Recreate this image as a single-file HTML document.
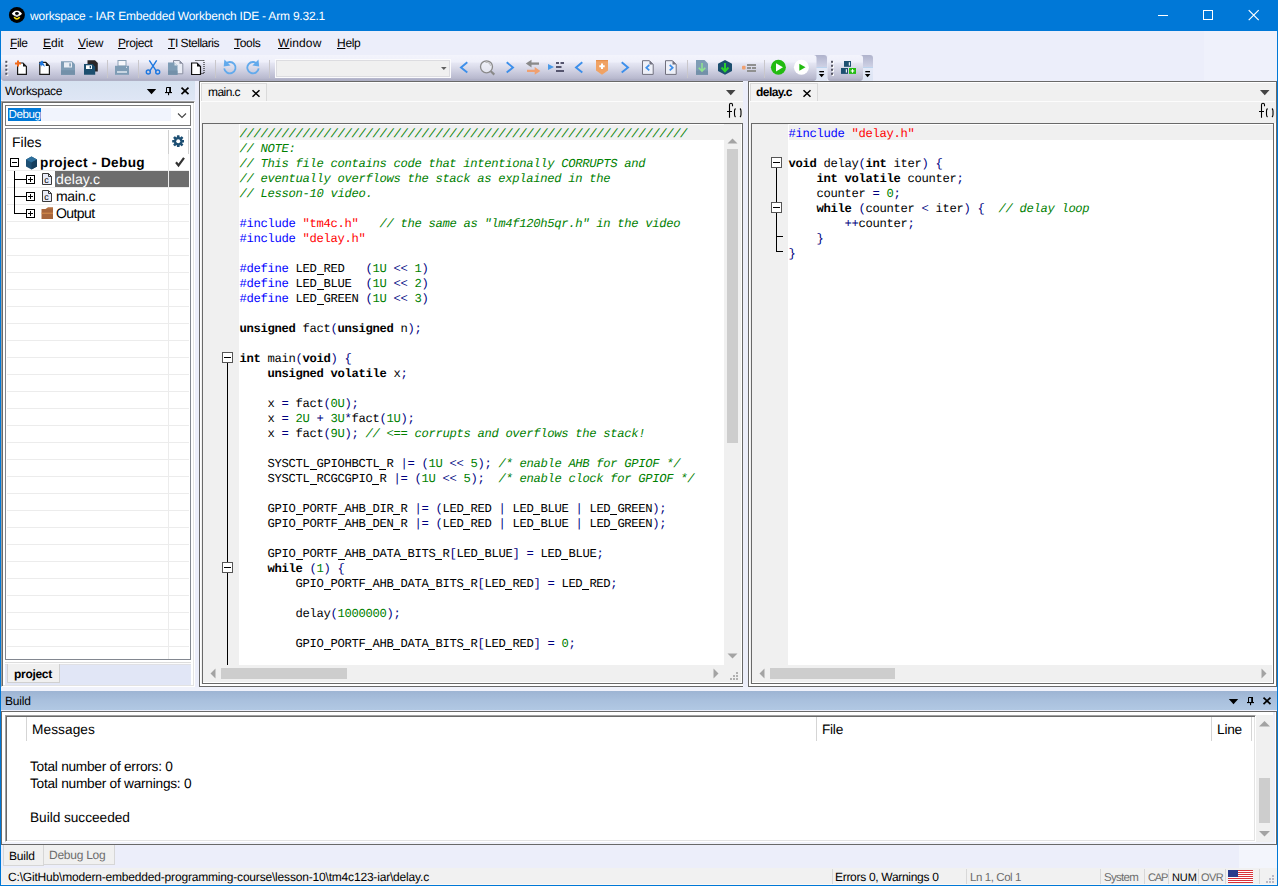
<!DOCTYPE html>
<html>
<head>
<meta charset="utf-8">
<title>workspace - IAR Embedded Workbench IDE - Arm 9.32.1</title>
<style>
*{box-sizing:border-box;margin:0;padding:0}
html,body{width:1278px;height:886px;overflow:hidden}
body{position:relative;background:#eceefa;font-family:"Liberation Sans",sans-serif;font-size:12px;text-rendering:geometricPrecision;color:#000}
.abs{position:absolute}
#win{position:absolute;left:0;top:0;width:1278px;height:886px;border-left:1px solid #0078d7;border-right:1px solid #0078d7;border-bottom:1px solid #0078d7}
/* title */
#title{position:absolute;left:0;top:0;width:1278px;height:31px;background:#0078d7;color:#fff}
#title .t{position:absolute;left:30px;top:9px;font-size:12px;text-rendering:geometricPrecision;line-height:15px;white-space:pre;letter-spacing:-0.2px}
/* menu */
#menu{position:absolute;left:1px;top:31px;width:1276px;height:24px;background:#eceefa}
#menu span{position:absolute;top:5px;font-size:12px;text-rendering:geometricPrecision;line-height:15px;white-space:pre}
#menu u{text-decoration:underline;text-underline-offset:1px}
/* toolbar */
.tb{position:absolute;top:55px;height:26px;background:linear-gradient(#f3f4fb 0%,#e4e6f2 45%,#c5c7d9 75%,#a8aac0 100%)}
/* panels */
.pane{position:absolute;background:#f0f0f0;border:1px solid #696969;box-shadow:inset 1px 1px 0 #fff}
.code{position:absolute;background:#fff;overflow:hidden}
pre{font-family:"Liberation Mono",monospace;font-size:12.2px;letter-spacing:-0.3212px;text-rendering:geometricPrecision;line-height:15px;white-space:pre;color:#000;position:absolute;left:0.6px;top:3px}
.c{color:#008000;font-style:italic}
.p{color:#0000ff}
.s{color:#ff0000}
.n{color:#008000}
.k{font-weight:bold}
.o{color:#000080}
.u{display:inline-block;width:7px;height:15px;vertical-align:top;position:relative;color:transparent;letter-spacing:0}
.u::after{content:"";position:absolute;left:0;top:12px;width:7px;height:1px;background:#000}
.bt{font-size:13.7px;line-height:17px;white-space:pre}
.st{top:870px;font-size:12px;text-rendering:geometricPrecision;line-height:15px;white-space:pre}
.g{color:#6d6d6d}
.sd{top:869px;width:1px;height:15px;background:#d8d8d8}
</style>
</head>
<body>
<div id="title">
<svg class="abs" style="left:8px;top:6px" width="18" height="18" viewBox="0 0 18 18"><circle cx="8.900" cy="8.900" r="8" fill="#000"/><path d="M3.800 7.800c1.700-2.500 3.400-3 5.100-3s3.400 0.500 5.100 3c-1.700 2-3.400 2.600-5.100 2.600S5.500 9.800 3.800 7.800z" fill="#fff"/><path d="M6.500 9.500h4.800l-2.400 1.700z" fill="#bbb"/><ellipse cx="8.900" cy="7.500" rx="1.900" ry="1.400" fill="#000"/><path d="M5.500 11c1 2.300 2.300 2.700 3.400 2.700s2.400-0.400 3.400-2.700l-1.400-0.300c-0.700 1-1.300 1.200-2 1.200s-1.300-0.200-2-1.200z" fill="#f2d80a"/></svg>
<svg class="abs" style="left:1150px;top:5px" width="120" height="21" viewBox="0 0 120 21"><g stroke="#fff" stroke-width="1" fill="none"><path d="M8 10.500h10" /><rect x="53.500" y="5.500" width="9" height="9"/><path d="M98.700 5.200l10 10M108.700 5.200l-10 10" stroke-width="1.200"/></g></svg>
<div class="t">workspace - IAR Embedded Workbench IDE - Arm 9.32.1</div></div>
<div id="menu">
<span style="left:9px;letter-spacing:-0.45px"><u>F</u>ile</span>
<span style="left:42px"><u>E</u>dit</span>
<span style="left:77px;letter-spacing:-0.1px"><u>V</u>iew</span>
<span style="left:117px;letter-spacing:-0.4px"><u>P</u>roject</span>
<span style="left:167px;letter-spacing:-0.47px"><u>T</u>I Stellaris</span>
<span style="left:233px;letter-spacing:-0.3px"><u>T</u>ools</span>
<span style="left:277px;letter-spacing:0.13px"><u>W</u>indow</span>
<span style="left:336px;letter-spacing:-0.3px"><u>H</u>elp</span>
</div>
<svg class="abs" id="tbsvg" style="left:0;top:55px" width="880" height="26" viewBox="0 0 880 26">
 <defs>
  <linearGradient id="tg" x1="0" y1="0" x2="0" y2="1"><stop offset="0" stop-color="#f3f4fc"/><stop offset="0.27" stop-color="#eff0fa"/><stop offset="0.32" stop-color="#e5e6f3"/><stop offset="0.506" stop-color="#d8d9e8"/><stop offset="0.7" stop-color="#c8c9dc"/><stop offset="0.895" stop-color="#b9bacf"/><stop offset="0.95" stop-color="#b2b3c9"/><stop offset="0.975" stop-color="#9c9db4"/><stop offset="1" stop-color="#9c9db4"/></linearGradient>
  <linearGradient id="cg" x1="0" y1="0" x2="0" y2="1"><stop offset="0" stop-color="#b0b3cc"/><stop offset="0.46" stop-color="#ced1e5"/><stop offset="0.47" stop-color="#bcd4ee"/><stop offset="0.51" stop-color="#bcd4ee"/><stop offset="0.52" stop-color="#e4e9f7"/><stop offset="1" stop-color="#dce4f4"/></linearGradient>
 </defs>
 <!-- caps -->
 <path d="M812 0h12a3 3 0 0 1 3 3v22.700h-15z" fill="url(#cg)"/>
 <path d="M858 0h12a3 3 0 0 1 3 3v22.700h-15z" fill="url(#cg)"/>
 <!-- bars -->
 <path d="M1 0h812.500a3 3 0 0 1 3 3v19.700a3 3 0 0 1-3 3H4a3 3 0 0 1-3-3z" fill="url(#tg)"/>
 <rect x="827.500" y="0" width="35.500" height="25.700" rx="3" fill="url(#tg)"/>
 <g fill="#000"><rect x="819.300" y="16" width="4.700" height="1.300"/><path d="M818.800 19h5.600l-2.800 3.200z"/><rect x="865.300" y="16" width="4.700" height="1.300"/><path d="M864.800 19h5.600l-2.800 3.200z"/></g>
 <!-- grips -->
 <g fill="#fff"><rect x="6.300" y="6.800" width="2" height="2"/><rect x="6.300" y="10.800" width="2" height="2"/><rect x="6.300" y="14.800" width="2" height="2"/><rect x="6.300" y="18.800" width="2" height="2"/><rect x="832" y="6.800" width="2" height="2"/><rect x="832" y="10.800" width="2" height="2"/><rect x="832" y="14.800" width="2" height="2"/><rect x="832" y="18.800" width="2" height="2"/></g>
 <g fill="#555562"><rect x="5.300" y="5.800" width="2" height="2"/><rect x="5.300" y="9.800" width="2" height="2"/><rect x="5.300" y="13.800" width="2" height="2"/><rect x="5.300" y="17.800" width="2" height="2"/><rect x="831" y="5.800" width="2" height="2"/><rect x="831" y="9.800" width="2" height="2"/><rect x="831" y="13.800" width="2" height="2"/><rect x="831" y="17.800" width="2" height="2"/></g>
 <!-- separators -->
 <g fill="#c9c7cb"><rect x="107" y="5" width="1" height="18"/><rect x="138" y="5" width="1" height="18"/><rect x="215" y="5" width="1" height="18"/><rect x="269" y="5" width="1" height="18"/><rect x="687" y="5" width="1" height="18"/><rect x="764" y="5" width="1" height="18"/></g>
 <!-- 1 new -->
 <path d="M17.600 8h5.400l3.400 3.400v8h-8.800z" fill="#fff" stroke="#1a1a1a" stroke-width="1.200"/><path d="M23 8v3.400h3.400z" fill="#1a1a1a"/>
 <path d="M15 7.500h6v2h-6zM17 5.500h2v6h-2z" fill="#f26a1b"/>
 <!-- 2 open -->
 <path d="M39.800 7.300h6l3.600 3.600v8.500h-9.600z" fill="#fff" stroke="#1a1a1a" stroke-width="1.200"/><path d="M45.800 7.300v3.600h3.600z" fill="#1a1a1a"/>
 <path d="M39 8.500l3-3 1.500 1.500-1 1c1.500 0.500 2.300 2 2 4-0.800-1.500-1.800-2-3-1.800l0.500 1.500z" fill="#1e78e0"/>
 <!-- 3 save -->
 <path d="M61 6.300h11l3 3v10.500h-14z" fill="#7e9cb5"/><rect x="61" y="15.300" width="14" height="4.500" fill="#7390a9"/><rect x="64" y="7.300" width="8" height="5.200" fill="#e9eef5"/><rect x="69.300" y="8.300" width="1.600" height="3.200" fill="#7e9cb5"/>
 <!-- 4 save all -->
 <path d="M87.500 5.200h7.500l2.800 2.800v8.600h-10.300z" fill="#2a2627"/><path d="M84 9h8.500l2.700 2.700v8.100h-11.200z" fill="#1d4f6f"/><rect x="86" y="10.300" width="6" height="3.700" fill="#fff"/><rect x="89.700" y="11" width="1.300" height="2.300" fill="#1d4f6f"/>
 <!-- 5 print -->
 <rect x="118" y="5.500" width="8" height="5.500" fill="#f6f7fb" stroke="#8aa0b5" stroke-width="1"/><rect x="115" y="10.800" width="14" height="9" fill="#7e9cb5"/><rect x="117" y="16.300" width="10" height="1.400" fill="#e9eef5"/><rect x="126" y="11.800" width="1" height="1" fill="#e9eef5"/>
 <!-- 6 cut -->
 <g stroke="#1e78e0" stroke-width="1.400" fill="none"><path d="M149.300 5.300l7.200 11M156.700 5.300l-7.200 11"/><circle cx="148.300" cy="17" r="2"/><circle cx="157.700" cy="17" r="2"/></g>
 <!-- 7 copy -->
 <path d="M173.500 5.500h6l3.300 3.300v10h-9.300z" fill="#e9ecf5" stroke="#8a8fa0" stroke-width="1"/><path d="M179.500 5.500v3.300h3.300z" fill="#8a8fa0"/><path d="M168 7.500h6.500l3 3v9.300h-9.500z" fill="#7e9cb5"/><path d="M174.500 7.500v3h3z" fill="#dfe6ee"/><rect x="168" y="15.500" width="9.500" height="4.300" fill="#7390a9"/>
 <!-- 8 paste -->
 <path d="M195.500 5.500h8.500v13h-4" stroke="#000" stroke-width="1" stroke-dasharray="1 1" fill="none"/><path d="M191.600 8h5.400l3.500 3.500v8h-8.900z" fill="#fff" stroke="#111" stroke-width="1.200"/><path d="M197 8v3.500h3.500z" fill="#111"/>
 <!-- 9 undo -->
 <g stroke="#62aaec" stroke-width="1.800" fill="none"><path d="M225.200 9.400A5.700 5.700 0 1 1 224.200 13.400"/><path d="M257.670 9.400A5.700 5.700 0 1 0 258.670 13.400"/></g><path d="M224.400 4.500l-0.700 7 6.800-0.900z" fill="#62aaec"/><path d="M258.470 4.500l0.700 7-6.800-0.900z" fill="#62aaec"/>
 <!-- combo -->
 <rect x="275.500" y="4.500" width="175" height="18" fill="#f0f0f0" stroke="#fbfbfd" stroke-width="1"/><rect x="276.500" y="5.500" width="173" height="16" fill="none" stroke="#dcdce0" stroke-width="1"/><path d="M441 12h5.600l-2.800 3z" fill="#606060"/>
 <!-- 11..13 -->
 <g stroke="#3d8fea" stroke-width="1.900" fill="none"><path d="M467.300 7.300l-6.300 5.100 6.300 5.100M506.700 7.300l6.300 5.100-6.300 5.100M582.300 7.300l-6.300 5.100 6.300 5.100M621.700 7.300l6.300 5.100-6.300 5.100"/></g>
 <circle cx="486.500" cy="11.800" r="6" fill="#f4f5fa" fill-opacity="0.600" stroke="#8a8a8a" stroke-width="1.300"/><path d="M490.800 16.300l3.500 3.300" stroke="#8a8a8a" stroke-width="2.200"/><path d="M485.500 7.500a4.300 4.300 0 0 1 5 3.300" stroke="#b8b8b8" stroke-width="1" fill="none"/>
 <!-- 14 swap -->
 <path d="M539 8.600h-9" stroke="#8a8a8a" stroke-width="2.300"/><path d="M525.800 8.600l5.700-3.800v7.600z" fill="#8a8a8a"/><path d="M527 15.900h9" stroke="#f0a070" stroke-width="2.300"/><path d="M540.400 15.900l-5.700-3.900v7.800z" fill="#f0a070"/>
 <!-- 15 -->
 <path d="M548 9l6 3-6 3z" fill="#4a9ae8"/><g fill="#55556e"><rect x="556" y="7" width="3" height="2"/><rect x="560.500" y="7" width="3.500" height="2"/><rect x="556" y="11" width="5.500" height="2"/><rect x="556" y="15" width="8" height="2"/></g>
 <!-- 17 bookmark -->
 <path d="M596 5h12v10.500l-6 4.300-6-4.300z" fill="#f0a264"/><rect x="596" y="5" width="12" height="1.200" fill="#e58f4c"/><path d="M599.300 10.200h5.400v2h-5.400zM601 8.500h2v5.400h-2z" fill="#fff"/>
 <!-- 19, 20 pages -->
 <g fill="#eef0f8" stroke="#70707e" stroke-width="1"><path d="M642.500 5.700h7l3.700 3.700v10h-10.700z"/><path d="M665.500 5.700h7l3.700 3.700v10h-10.700z"/></g><path d="M649.500 5.700v3.700h3.700zM672.500 5.700v3.700h3.700z" fill="#70707e"/>
 <g stroke="#3d8fea" stroke-width="1.700" fill="none"><path d="M649.300 10l-3 2.700 3 2.700M669.700 10l3 2.700-3 2.700"/></g>
 <!-- 21 download -->
 <path d="M696 5h8.500l3.500 3.500v11.300h-12z" fill="#7e9cb5"/><rect x="696" y="15.500" width="12" height="4.300" fill="#7390a9"/><g stroke="#8fe38f" stroke-width="1.600" fill="none"><path d="M702 8v8M698.700 12.700l3.300 3.300 3.300-3.300"/></g>
 <!-- 22 hexagon -->
 <path d="M725 5l7 3.700v7.400l-7 3.700-7-3.700v-7.400z" fill="#1d4f6f"/><g stroke="#2bd02b" stroke-width="2" fill="none"><path d="M725 8v8M721.500 12.500l3.500 3.700 3.500-3.700"/></g>
 <!-- 23 -->
 <rect x="742" y="10.800" width="3.600" height="3.600" rx="1" fill="#f0a070"/><g fill="#909090"><rect x="747" y="9" width="9" height="2"/><rect x="747" y="12" width="4" height="2"/><rect x="752" y="12" width="4" height="2"/><rect x="747" y="15" width="9" height="2"/></g>
 <!-- 24, 25 play -->
 <circle cx="778.400" cy="12.300" r="7.500" fill="#22bb11"/><path d="M776 8.200l7 4.100-7 4.100z" fill="#fff"/>
 <circle cx="801.400" cy="12.300" r="7.500" fill="#fff"/><path d="M799.300 8.800l6.200 3.500-6.200 3.500z" fill="#22bb11"/>
 <!-- 26 blocks -->
 <g fill="#1d5070"><rect x="844" y="6" width="7" height="5.800"/><rect x="841" y="13" width="7" height="5.900"/></g><rect x="849" y="13" width="7" height="5.900" fill="#22bb11"/><g fill="#fff"><rect x="848.800" y="7.200" width="1.100" height="3.400"/><rect x="845.800" y="14.200" width="1.100" height="3.400"/><rect x="850.700" y="15.400" width="3.600" height="1.100"/><rect x="851.950" y="14.150" width="1.100" height="3.600"/></g>
</svg>

<div class="abs" style="left:1204px;top:31px;width:73px;height:50px;background:#eff1fb"></div>
<!-- WORKSPACE -->
<div id="ws">
 <div class="abs" style="left:1px;top:81px;width:194px;height:20px;background:linear-gradient(#d6e2f0,#dfe6f5)"></div>
 <div class="abs" style="left:1px;top:100px;width:194px;height:1px;background:#eef1fc"></div>
 <div class="abs" style="left:1px;top:101px;width:194px;height:586px;background:#fff;border-left:1px solid #a0a0a0;border-top:1px solid #a0a0a0;border-right:1px solid #fff;border-bottom:1px solid #fff;box-shadow:inset 1px 1px 0 #696969,inset -1px -1px 0 #e3e3e3"></div>
 <div class="abs" style="left:195px;top:81px;width:4px;height:606px;background:#eceefa"></div>
 <div class="abs" style="left:5px;top:84px;font-size:12px;text-rendering:geometricPrecision;line-height:15px;letter-spacing:-0.3px">Workspace</div>
 <!-- header icons -->
 <svg class="abs" style="left:145px;top:85px" width="46" height="12" viewBox="0 0 46 12">
  <path d="M1.800 4h9.400l-4.700 5.200z" fill="#000"/>
  <path d="M21.500 7.500V2.500h3.500" stroke="#000" stroke-width="1" fill="none"/><rect x="24.200" y="2" width="1.800" height="5.500" fill="#000"/><rect x="20" y="7" width="7" height="1.100" fill="#000"/><rect x="23" y="8" width="1.100" height="2.200" fill="#000"/>
  <path d="M36.500 2.600l7 6.600M43.500 2.600l-7 6.600" stroke="#000" stroke-width="1.700" fill="none"/>
 </svg>
 <!-- combo -->
 <div class="abs" style="left:5px;top:105px;width:186px;height:21px;background:#fff;border:1px solid #7a7a7a"></div>
 <div class="abs" style="left:8px;top:108px;width:163px;height:13px;background:#f1f4fd"></div>
 <div class="abs" style="left:8px;top:108px;width:33px;height:13px;background:#0078d7;color:#fff;font-size:11.6px;line-height:14px;letter-spacing:-0.4px;padding-left:0.5px">Debug</div>
 <svg class="abs" style="left:177px;top:112px" width="10" height="7" viewBox="0 0 10 7"><path d="M1 1.500l4 4 4-4" stroke="#444" stroke-width="1.100" fill="none"/></svg>
 <!-- tree frame -->
 <div class="abs" id="tree" style="left:5px;top:128px;width:186px;height:532px;background:#fff;border:1px solid #828790;overflow:hidden">
  <div class="abs" style="left:1px;top:42px;width:182px;height:490px;background:repeating-linear-gradient(#fff 0,#fff 16px,#ececec 16px,#ececec 17px)"></div>
  <div class="abs" style="left:1px;top:41px;width:182px;height:1px;background:#ececec"></div><div class="abs" style="left:162px;top:3px;width:1px;height:528px;background:#ececec"></div>
  <div class="abs" style="left:162px;top:1px;width:1px;height:24px;background:#d0d0d0"></div>
  <div class="abs" style="left:182px;top:1px;width:1px;height:24px;background:#d0d0d0"></div>
  <div class="abs" style="left:6px;top:5px;font-size:14px;line-height:17px">Files</div>
  <!-- selected row -->
  <div class="abs" style="left:49px;top:42px;width:113px;height:16px;background:#6d6d6d"></div>
  <div class="abs" style="left:163px;top:42px;width:20px;height:16px;background:#6d6d6d"></div>
  <div class="abs" style="left:34px;top:25px;font-size:13.6px;line-height:17px;font-weight:bold;white-space:pre;letter-spacing:0.35px">project - Debug</div>
  <div class="abs" style="left:50px;top:42px;font-size:14px;line-height:17px;color:#fff;letter-spacing:0.1px">delay.c</div>
  <div class="abs" style="left:50px;top:59px;font-size:14px;line-height:17px;letter-spacing:-0.3px">main.c</div>
  <div class="abs" style="left:50px;top:76px;font-size:14px;line-height:17px;letter-spacing:-0.6px">Output</div>
  <!-- tree lines / boxes / icons -->
  <svg class="abs" style="left:0;top:24px" width="186" height="72" viewBox="0 0 186 72">
   <g stroke="#000" stroke-width="1" fill="none" shape-rendering="crispEdges">
    <path d="M8.5 18v42.5h12M8.5 26.5h12M8.5 43.5h12"/>
    <rect x="4.5" y="5.5" width="8" height="8" fill="#fff"/><path d="M6 9.5h5"/>
    <rect x="20.5" y="22.5" width="8" height="8" fill="#fff"/><path d="M22 26.5h5M24.5 24v5"/>
    <rect x="20.5" y="39.5" width="8" height="8" fill="#fff"/><path d="M22 43.5h5M24.5 41v5"/>
    <rect x="20.5" y="56.5" width="8" height="8" fill="#fff"/><path d="M22 60.5h5M24.5 58v5"/>
   </g>
   <!-- cube -->
   <path d="M25.5 3.5L31 6.5v7L25.5 16.5 20 13.500v-7z" fill="#1d4f73"/><path d="M25.500 3.500L31 6.500 25.500 9.500 20 6.500z" fill="#2d6f9c"/><path d="M25.500 9.500L31 6.500v7L25.500 16.500z" fill="#163f5e"/>
   <!-- file icons -->
   <g fill="#e9ecf8" stroke="#3a3a3a" stroke-width="1"><path d="M36.500 20.500h6l3 3v8h-9z"/><path d="M36.500 37.500h6l3 3v8h-9z"/><path d="M42.500 20.500v3h3M42.500 37.500v3h3" fill="none"/></g>
   <g font-family="Liberation Sans" font-size="9" fill="#000"><text x="38.300" y="30">c</text><text x="38.300" y="47">c</text></g>
   <!-- folder -->
   <path d="M39.500 56l2.500-1.800h5v1.800z" fill="#b5703f"/><path d="M35.500 56h11.500v10h-11.500z" fill="#a8663c"/><path d="M35.500 59.700h11.500v1h-11.500z" fill="#d9904e"/>
   <!-- gear placeholder at header is outside this svg -->
   <path d="M170 9.300l2.500 3.200 5.500-7.700" stroke="#333" stroke-width="2.200" fill="none"/>
  </svg>
  <svg class="abs" style="left:165.700px;top:5.700px" width="12.500" height="12.500" viewBox="0 0 14 14"><g fill="#1d4f73"><circle cx="7" cy="7" r="4.900"/><rect x="5.500" y="0.200" width="3" height="13.600" rx="0.600"/><rect x="5.500" y="0.200" width="3" height="13.600" rx="0.600" transform="rotate(45 7 7)"/><rect x="5.500" y="0.200" width="3" height="13.600" rx="0.600" transform="rotate(90 7 7)"/><rect x="5.500" y="0.200" width="3" height="13.600" rx="0.600" transform="rotate(135 7 7)"/></g><circle cx="7" cy="7" r="2.200" fill="#fff"/></svg>
 </div>
 <!-- project tab -->
 <div class="abs" style="left:5px;top:662px;width:186px;height:23px;background:#e1e6f6"></div>
 <div class="abs" style="left:5px;top:662px;width:186px;height:3px;background:#fcfcfc;border-top:1px solid #dcdcdc;border-bottom:1px solid #e0e0e4"></div>
 <div class="abs" style="left:7px;top:664px;width:53px;height:19px;background:#f0f0f0;border:1px solid #d0d0d0;border-top:none;font-weight:bold;font-size:12px;text-rendering:geometricPrecision;line-height:20px;padding-left:6px;letter-spacing:-0.3px">project</div>
</div>
<!-- EDITORS -->
<div id="ed1">
 <div class="pane" style="left:199px;top:81px;width:544px;height:606px;border-right:none"></div><div class="abs" style="left:200px;top:684px;width:543px;height:2px;background:#fff"></div>
 <!-- tab -->
 <div class="abs" style="left:201px;top:83px;width:66px;height:19px;border:1px solid #dadada;border-bottom:none;background:#f2f2f2"></div>
 <div class="abs tabt" style="left:208px;top:85px;font-size:12px;text-rendering:geometricPrecision;line-height:15px;letter-spacing:-0.55px">main.c</div>
 <svg class="abs" style="left:251px;top:89px" width="10" height="9" viewBox="0 0 10 9"><path d="M1.500 1.300l7 6.400M8.500 1.300l-7 6.400" stroke="#000" stroke-width="1.500"/></svg>
 <svg class="abs" style="left:726px;top:90px" width="10" height="6" viewBox="0 0 10 6"><path d="M0 0h9.500l-4.750 5.200z" fill="#444"/></svg>
 <div class="abs" style="left:200px;top:101px;width:543px;height:1px;background:#fcfcfc"></div>
 <!-- f() -->
 <svg class="abs fx" style="left:726px;top:102px" width="17" height="18" viewBox="0 0 17 18"><path d="M6.500 4.300v-1.600c0-1-0.500-1.400-1.500-1.400s-1.500 0.500-1.500 1.500v13M1 9.500h5" stroke="#000" stroke-width="1.100" fill="none"/><path d="M9.500 6.500c-0.900 0.800-1 1.300-1 2.500v3.500c0 1.200 0.100 1.700 1 2.500M14 6.500c0.900 0.800 1 1.300 1 2.500v3.500c0 1.200-0.100 1.700-1 2.500" stroke="#000" stroke-width="1.100" fill="none"/></svg>
 <!-- code frame -->
 <div class="abs" style="left:202px;top:123px;width:541px;height:561px;border:1px solid #696969;background:#f0f0f0;box-shadow:inset -1px -1px 0 #fff"></div>
 <div class="code" style="left:239px;top:124px;width:485px;height:541px">
  <div class="abs" style="left:1px;top:1px;width:484px;height:15px;background:#f0f0f0"></div>
<pre id="c1"><span class="c">////////////////////////////////////////////////////////////////</span>
<span class="c">// NOTE:</span>
<span class="c">// This file contains code that intentionally CORRUPTS and</span>
<span class="c">// eventually overflows the stack as explained in the</span>
<span class="c">// Lesson-10 video.</span>

<span class="p">#include</span> <span class="s">"tm4c.h"</span>   <span class="c">// the same as "lm4f120h5qr.h" in the video</span>
<span class="p">#include</span> <span class="s">"delay.h"</span>

<span class="p">#define</span> LED<span class="u">_</span>RED   <span class="o">(</span><span class="n">1U</span> <span class="o">&lt;&lt;</span> <span class="n">1</span><span class="o">)</span>
<span class="p">#define</span> LED<span class="u">_</span>BLUE  <span class="o">(</span><span class="n">1U</span> <span class="o">&lt;&lt;</span> <span class="n">2</span><span class="o">)</span>
<span class="p">#define</span> LED<span class="u">_</span>GREEN <span class="o">(</span><span class="n">1U</span> <span class="o">&lt;&lt;</span> <span class="n">3</span><span class="o">)</span>

<span class="k">unsigned</span> fact<span class="o">(</span><span class="k">unsigned</span> n<span class="o">);</span>

<span class="k">int</span> main<span class="o">(</span><span class="k">void</span><span class="o">) {</span>
    <span class="k">unsigned volatile</span> x<span class="o">;</span>

    x <span class="o">=</span> fact<span class="o">(</span><span class="n">0U</span><span class="o">);</span>
    x <span class="o">=</span> <span class="n">2U</span> <span class="o">+</span> <span class="n">3U</span><span class="o">*</span>fact<span class="o">(</span><span class="n">1U</span><span class="o">);</span>
    x <span class="o">=</span> fact<span class="o">(</span><span class="n">9U</span><span class="o">);</span> <span class="c">// &lt;== corrupts and overflows the stack!</span>

    SYSCTL<span class="u">_</span>GPIOHBCTL<span class="u">_</span>R <span class="o">|= (</span><span class="n">1U</span> <span class="o">&lt;&lt;</span> <span class="n">5</span><span class="o">);</span> <span class="c">/* enable AHB for GPIOF */</span>
    SYSCTL<span class="u">_</span>RCGCGPIO<span class="u">_</span>R <span class="o">|= (</span><span class="n">1U</span> <span class="o">&lt;&lt;</span> <span class="n">5</span><span class="o">);</span>  <span class="c">/* enable clock for GPIOF */</span>

    GPIO<span class="u">_</span>PORTF<span class="u">_</span>AHB<span class="u">_</span>DIR<span class="u">_</span>R <span class="o">|= (</span>LED<span class="u">_</span>RED <span class="o">|</span> LED<span class="u">_</span>BLUE <span class="o">|</span> LED<span class="u">_</span>GREEN<span class="o">);</span>
    GPIO<span class="u">_</span>PORTF<span class="u">_</span>AHB<span class="u">_</span>DEN<span class="u">_</span>R <span class="o">|= (</span>LED<span class="u">_</span>RED <span class="o">|</span> LED<span class="u">_</span>BLUE <span class="o">|</span> LED<span class="u">_</span>GREEN<span class="o">);</span>

    GPIO<span class="u">_</span>PORTF<span class="u">_</span>AHB<span class="u">_</span>DATA<span class="u">_</span>BITS<span class="u">_</span>R<span class="o">[</span>LED<span class="u">_</span>BLUE<span class="o">] =</span> LED<span class="u">_</span>BLUE<span class="o">;</span>
    <span class="k">while</span> <span class="o">(</span><span class="n">1</span><span class="o">) {</span>
        GPIO<span class="u">_</span>PORTF<span class="u">_</span>AHB<span class="u">_</span>DATA<span class="u">_</span>BITS<span class="u">_</span>R<span class="o">[</span>LED<span class="u">_</span>RED<span class="o">] =</span> LED<span class="u">_</span>RED<span class="o">;</span>

        delay<span class="o">(</span><span class="n">1000000</span><span class="o">);</span>

        GPIO<span class="u">_</span>PORTF<span class="u">_</span>AHB<span class="u">_</span>DATA<span class="u">_</span>BITS<span class="u">_</span>R<span class="o">[</span>LED<span class="u">_</span>RED<span class="o">] =</span> <span class="n">0</span><span class="o">;</span>
</pre>
 </div>
 <!-- fold markers -->
 <svg class="abs" style="left:220px;top:350px" width="16" height="316" viewBox="0 0 16 316" shape-rendering="crispEdges"><g stroke="#000" fill="none"><path d="M7.500 13v303"/><rect x="2.500" y="2.500" width="10" height="10" fill="#fff" stroke="#555"/><path d="M4 7.500h7"/><rect x="2.500" y="212.500" width="10" height="10" fill="#fff" stroke="#555"/><path d="M4 217.500h7"/></g></svg>
 <!-- vscroll -->
 <div class="abs" style="left:724px;top:125px;width:17px;height:540px;background:#f0f0f0"></div>
 <div class="abs" style="left:727px;top:149px;width:11px;height:294px;background:#cdcdcd"></div>
 <svg class="abs" style="left:727px;top:138px" width="11" height="6" viewBox="0 0 11 6"><path d="M0.500 5.500h10l-5-5z" fill="#a3a3a3"/></svg>
 <svg class="abs" style="left:727px;top:653px" width="11" height="6" viewBox="0 0 11 6"><path d="M0.500 0.500h10l-5 5z" fill="#a3a3a3"/></svg>
 <!-- hscroll -->
 <div class="abs" style="left:203px;top:665px;width:538px;height:17px;background:#f0f0f0"></div>
 <div class="abs" style="left:221px;top:668px;width:126px;height:11px;background:#cdcdcd"></div>
 <svg class="abs" style="left:210px;top:668px" width="6" height="11" viewBox="0 0 6 11"><path d="M5.500 0.500v10l-5-5z" fill="#a3a3a3"/></svg>
 <svg class="abs" style="left:713px;top:668px" width="6" height="11" viewBox="0 0 6 11"><path d="M0.500 0.500v10l5-5z" fill="#a3a3a3"/></svg>
 <svg class="abs" style="left:730px;top:672px" width="8" height="8" viewBox="0 0 8 8" shape-rendering="crispEdges"><g fill="#b0b0b0"><rect x="6" y="0" width="2" height="2"/><rect x="3" y="3" width="2" height="2"/><rect x="6" y="3" width="2" height="2"/><rect x="0" y="6" width="2" height="2"/><rect x="3" y="6" width="2" height="2"/><rect x="6" y="6" width="2" height="2"/></g></svg>
</div>
<div id="ed2">
 <div class="abs" style="left:743px;top:81px;width:5px;height:606px;background:#eceefa"></div>
 <div class="pane" style="left:748px;top:81px;width:529px;height:606px"></div><div class="abs" style="left:749px;top:684px;width:527px;height:2px;background:#fff"></div><div class="abs" style="left:1274px;top:123px;width:2px;height:563px;background:#fff"></div>
 <div class="abs" style="left:750px;top:83px;width:68px;height:19px;border:1px solid #dadada;border-bottom:none;background:#f2f2f2"></div>
 <div class="abs tabt" style="left:756px;top:85px;font-size:12px;text-rendering:geometricPrecision;line-height:15px;font-weight:bold;letter-spacing:-0.55px">delay.c</div>
 <svg class="abs" style="left:802px;top:89px" width="10" height="9" viewBox="0 0 10 9"><path d="M1.500 1.300l7 6.400M8.500 1.300l-7 6.400" stroke="#000" stroke-width="1.500"/></svg>
 <svg class="abs" style="left:1260px;top:90px" width="10" height="6" viewBox="0 0 10 6"><path d="M0 0h9.500l-4.750 5.200z" fill="#444"/></svg>
 <div class="abs" style="left:749px;top:101px;width:526px;height:1px;background:#fcfcfc"></div>
 <svg class="abs fx" style="left:1258px;top:102px" width="17" height="18" viewBox="0 0 17 18"><path d="M6.500 4.300v-1.600c0-1-0.500-1.400-1.500-1.400s-1.500 0.500-1.500 1.500v13M1 9.500h5" stroke="#000" stroke-width="1.100" fill="none"/><path d="M9.500 6.500c-0.900 0.800-1 1.300-1 2.500v3.500c0 1.200 0.100 1.700 1 2.500M14 6.500c0.900 0.800 1 1.300 1 2.500v3.500c0 1.200-0.100 1.700-1 2.500" stroke="#000" stroke-width="1.100" fill="none"/></svg>
 <div class="abs" style="left:751px;top:123px;width:523px;height:561px;border:1px solid #696969;background:#f0f0f0;box-shadow:inset -1px -1px 0 #fff"></div>
 <div class="code" style="left:788px;top:124px;width:485px;height:541px">
  <div class="abs" style="left:1px;top:1px;width:484px;height:15px;background:#f0f0f0"></div>
<pre id="c2"><span class="p">#include</span> <span class="s">"delay.h"</span>

<span class="k">void</span> delay<span class="o">(</span><span class="k">int</span> iter<span class="o">) {</span>
    <span class="k">int volatile</span> counter<span class="o">;</span>
    counter <span class="o">=</span> <span class="n">0</span><span class="o">;</span>
    <span class="k">while</span> <span class="o">(</span>counter <span class="o">&lt;</span> iter<span class="o">) {</span>  <span class="c">// delay loop</span>
        <span class="o">++</span>counter<span class="o">;</span>
    <span class="o">}</span>
<span class="o">}</span>
</pre>
 </div>
 <svg class="abs" style="left:769px;top:155px" width="16" height="100" viewBox="0 0 16 100" shape-rendering="crispEdges"><g stroke="#000" fill="none"><path d="M7.500 13v83.500h6M7.500 81.500h6"/><rect x="2.500" y="2.500" width="10" height="10" fill="#fff" stroke="#555"/><path d="M4 7.500h7"/><rect x="2.500" y="47.500" width="10" height="10" fill="#fff" stroke="#555"/><path d="M4 52.500h7"/></g></svg>
 <!-- hscroll -->
 <div class="abs" style="left:752px;top:665px;width:520px;height:17px;background:#f0f0f0"></div>
 <div class="abs" style="left:770px;top:668px;width:125px;height:11px;background:#cdcdcd"></div>
 <svg class="abs" style="left:759px;top:668px" width="6" height="11" viewBox="0 0 6 11"><path d="M5.500 0.500v10l-5-5z" fill="#a3a3a3"/></svg>
 <svg class="abs" style="left:1261px;top:668px" width="6" height="11" viewBox="0 0 6 11"><path d="M0.500 0.500v10l5-5z" fill="#a3a3a3"/></svg>
</div>
<!-- BUILD -->
<div id="build">
 <div class="abs" style="left:1px;top:687px;width:1276px;height:4px;background:#f0f2fb"></div>
 <div class="abs" style="left:1px;top:691px;width:1276px;height:19px;background:linear-gradient(#9db4d3,#a9c0dd 50%,#b1c8e3)"></div>
 <div class="abs" style="left:1px;top:710px;width:1276px;height:1px;background:#eef0fc"></div>
 <div class="abs" style="left:5px;top:694px;font-size:12px;text-rendering:geometricPrecision;line-height:15px;letter-spacing:-0.2px">Build</div>
 <svg class="abs" style="left:1227px;top:695px" width="46" height="12" viewBox="0 0 46 12">
  <path d="M1.800 4h9.400l-4.700 5.200z" fill="#000"/>
  <path d="M21.500 7.500V2.500h3.500" stroke="#000" stroke-width="1" fill="none"/><rect x="24.200" y="2" width="1.800" height="5.500" fill="#000"/><rect x="20" y="7" width="7" height="1.100" fill="#000"/><rect x="23" y="8" width="1.100" height="2.200" fill="#000"/>
  <path d="M36.500 2.600l7 6.600M43.500 2.600l-7 6.600" stroke="#000" stroke-width="1.700" fill="none"/>
 </svg>
 <div class="abs" style="left:1px;top:711px;width:1276px;height:134px;background:#fff;border:1px solid #696969"></div>
 <div class="abs" style="left:1273px;top:712px;width:2px;height:132px;background:#eceefa"></div>
 <div class="abs" style="left:2px;top:842px;width:1273px;height:2px;background:#f0f2fb"></div>
 <!-- message box -->
 <div class="abs" style="left:5px;top:715px;width:1251px;height:127px;border-left:1px solid #a0a0a0;border-top:1px solid #a0a0a0;border-right:1px solid #fff;border-bottom:1px solid #fff;box-shadow:inset 1px 1px 0 #696969,inset -1px -1px 0 #e3e3e3;background:#fff"></div>
 <div class="abs" style="left:26px;top:717px;width:1px;height:24px;background:#d5d5d5"></div>
 <div class="abs" style="left:816px;top:717px;width:1px;height:24px;background:#d5d5d5"></div>
 <div class="abs" style="left:1211px;top:717px;width:1px;height:24px;background:#d5d5d5"></div>
 <div class="abs" style="left:1251px;top:717px;width:1px;height:24px;background:#d5d5d5"></div>
 <div class="abs bt" style="left:32px;top:721px;letter-spacing:0.07px">Messages</div>
 <div class="abs bt" style="left:822px;top:721px;letter-spacing:-0.27px">File</div>
 <div class="abs bt" style="left:1217px;top:721px;letter-spacing:-0.22px">Line</div>
 <div class="abs bt" style="left:30px;top:758px;letter-spacing:-0.26px">Total number of errors: 0</div>
 <div class="abs bt" style="left:30px;top:775px;letter-spacing:-0.254px">Total number of warnings: 0</div>
 <div class="abs bt" style="left:30px;top:809px;letter-spacing:-0.04px">Build succeeded</div>
 <!-- scrollbar -->
 <div class="abs" style="left:1256px;top:715px;width:17px;height:127px;background:#f0f0f0"></div>
 <div class="abs" style="left:1259px;top:778px;width:11px;height:45px;background:#cdcdcd"></div>
 <svg class="abs" style="left:1259px;top:721px" width="11" height="6" viewBox="0 0 11 6"><path d="M0 5.500h11l-5.500-5.500z" fill="#a3a3a3"/></svg>
 <svg class="abs" style="left:1259px;top:831px" width="11" height="6" viewBox="0 0 11 6"><path d="M0 0h11l-5.500 5.500z" fill="#a3a3a3"/></svg>
 <!-- tabs -->
 <div class="abs" style="left:3px;top:845px;width:41px;height:21px;background:#f0f0f0;border:1px solid #d6d6d6;border-top:none;font-size:12px;text-rendering:geometricPrecision;line-height:22px;padding-left:5px;letter-spacing:-0.2px">Build</div>
 <div class="abs" style="left:44px;top:845px;width:71px;height:20px;background:#f0f0f0;border:1px solid #d6d6d6;border-top:none;border-left:none;font-size:12px;text-rendering:geometricPrecision;line-height:21px;padding-left:5px;color:#6d6d6d;letter-spacing:-0.25px">Debug Log</div>
</div>
<!-- STATUS -->
<div id="status">
 <div class="abs" style="left:1239px;top:845px;width:38px;height:23px;background:#f3f5fc"></div>
 <div class="abs" style="left:1px;top:868px;width:1276px;height:17px;background:#f1f1f1"></div><div class="abs" style="left:1px;top:884px;width:1276px;height:1px;background:#fcf8f4"></div>
 <div class="abs st" style="left:8px;letter-spacing:-0.185px">C:\GitHub\modern-embedded-programming-course\lesson-10\tm4c123-iar\delay.c</div>
 <div class="abs st" style="left:835px;letter-spacing:-0.3px">Errors 0, Warnings 0</div>
 <div class="abs st g" style="left:970px;top:871px;font-size:11.5px;letter-spacing:-0.42px">Ln 1, Col 1</div>
 <div class="abs st g" style="left:1104px;top:871px;font-size:11.5px;letter-spacing:-0.7px">System</div>
 <div class="abs st g" style="left:1148px;top:871px;font-size:11px;letter-spacing:-1.1px">CAP</div>
 <div class="abs st" style="left:1172px;top:871px;font-size:11px;letter-spacing:-0.1px">NUM</div>
 <div class="abs st g" style="left:1201px;top:871px;font-size:11px;letter-spacing:-0.6px">OVR</div>
 <div class="abs sd" style="left:832px"></div><div class="abs sd" style="left:966px"></div><div class="abs sd" style="left:1100px"></div><div class="abs sd" style="left:1144px"></div><div class="abs sd" style="left:1168px"></div><div class="abs sd" style="left:1198px"></div><div class="abs sd" style="left:1225px"></div><div class="abs sd" style="left:1259px"></div>
 <svg class="abs" style="left:1228px;top:870px" width="25" height="13" viewBox="0 0 25 13"><rect width="25" height="13" fill="#fff"/><g fill="#d8313a"><rect y="0" width="25" height="1"/><rect y="2" width="25" height="1"/><rect y="4" width="25" height="1"/><rect y="6" width="25" height="1"/><rect y="8" width="25" height="1"/><rect y="10" width="25" height="1"/><rect y="12" width="25" height="1"/></g><rect width="10" height="7" fill="#2a3a8c"/></svg>
 <svg class="abs" style="left:1266px;top:875px" width="9" height="9" viewBox="0 0 9 9"><g fill="#b8b8c4"><rect x="6" y="0" width="2" height="2"/><rect x="3" y="3" width="2" height="2"/><rect x="6" y="3" width="2" height="2"/><rect x="0" y="6" width="2" height="2"/><rect x="3" y="6" width="2" height="2"/><rect x="6" y="6" width="2" height="2"/></g></svg>
</div>
<div id="win"></div>
</body>
</html>
